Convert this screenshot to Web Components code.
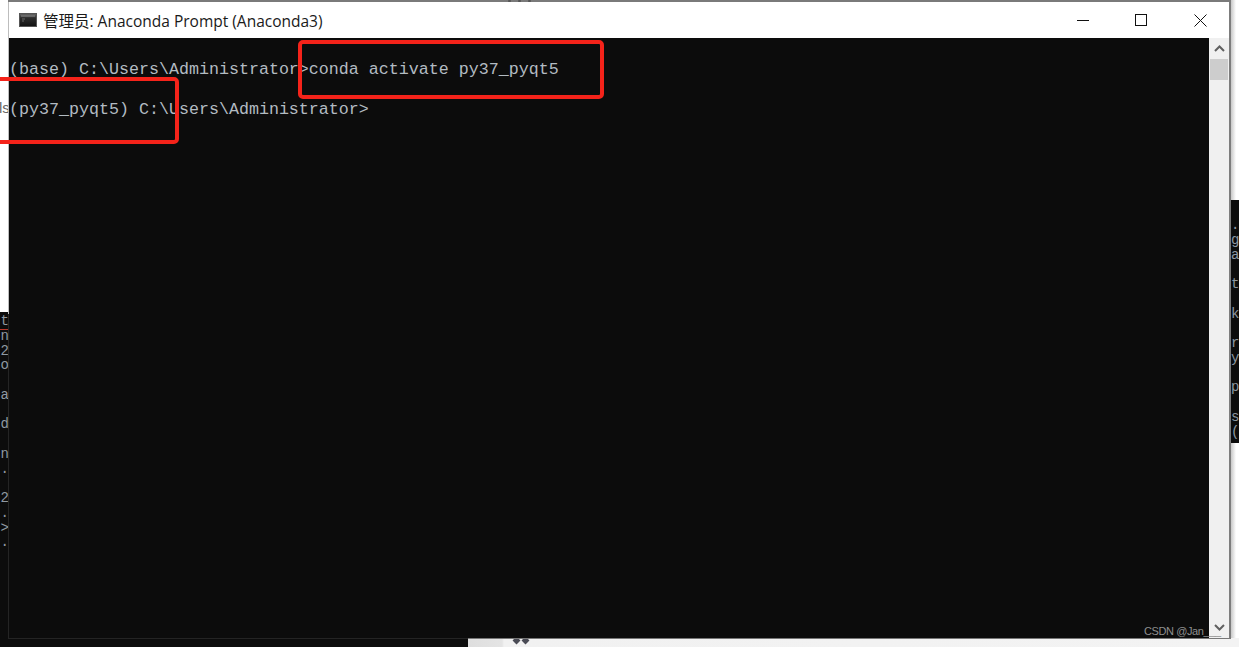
<!DOCTYPE html>
<html lang="zh">
<head>
<meta charset="utf-8">
<title>Anaconda Prompt</title>
<style>
html,body{margin:0;padding:0;background:#fff;}
body{width:1239px;height:647px;overflow:hidden;}
</style>
</head>
<body>
<desk-scene>
  <bg-log slot="left" side="left" top="314" lines="t|n|2|o||a||d||n|.||2|.|&gt;|."></bg-log>
  <bg-log slot="right" side="right" top="216" lines="s.|ag|oa||_t||ck||fr|py||_p||rs| ("></bg-log>
  <console-window slot="window" title="管理员: Anaconda Prompt (Anaconda3)">
    <console-line></console-line>
    <console-line>(base) C:\Users\Administrator&gt;conda activate py37_pyqt5</console-line>
    <console-line></console-line>
    <console-line>(py37_pyqt5) C:\Users\Administrator&gt;</console-line>
  </console-window>
  <red-callout slot="marks" style="left:298px;top:40px;width:306px;height:59px"></red-callout>
  <red-callout slot="marks" style="left:-12px;top:77px;width:191px;height:67px"></red-callout>
</desk-scene>

<script>
const shadow = (el, html) => { el.attachShadow({mode:'open'}).innerHTML = html; };

customElements.define('desk-scene', class extends HTMLElement {
  constructor(){ super(); shadow(this, `
    <style>
      :host{display:block;position:relative;width:1239px;height:647px;overflow:hidden;background:#fff;}
      .strip{position:absolute;left:0;right:0;bottom:0;height:9px;display:flex;}
      .dark{width:468px;background:#0c0c0c;}
      .light{flex:1;position:relative;background:linear-gradient(90deg,#dedede 0,#e4e4e4 34px,#f1f1f1 36px,#f3f3f3 100%);}
      .dot{position:absolute;top:-1px;width:7px;height:7px;background:#4a4b55;transform:rotate(45deg) scale(.8);}
      .handle{position:absolute;top:0;left:508px;display:flex;gap:7px;z-index:3;}
      .handle i{width:3px;height:2px;background:#555;border-radius:1px;}
      .ls{position:absolute;left:-1px;top:100px;width:10px;font:15px/16px "Liberation Sans",sans-serif;color:#666;overflow:hidden;white-space:nowrap;}
      .lpane{position:absolute;left:0;top:312px;bottom:0;width:12px;background:#0c0c0c;}
      .rpane{position:absolute;left:1222px;right:0;top:200px;height:243px;background:#0c0c0c;}
      .shadow{position:absolute;left:1231px;top:0;width:5px;height:200px;background:linear-gradient(90deg,#c8c8c8,#fff);}
      .shadow2{position:absolute;left:1231px;top:443px;width:5px;height:200px;background:linear-gradient(90deg,#c8c8c8,#fff);}
      .shadow3{position:absolute;left:1100px;top:639px;width:136px;height:3px;background:linear-gradient(#c8c8c8,#fff);}
      .win{position:absolute;left:8px;top:0;z-index:2;}
    </style>
    <div class="ls">ls</div>
    <div class="lpane"><slot name="left"></slot></div>
    <div class="rpane"><slot name="right"></slot></div>
    <div class="shadow"></div><div class="shadow2"></div><div class="shadow3"></div>
    <div class="strip"><div class="dark"></div><div class="light"><span class="dot" style="left:45px"></span><span class="dot" style="left:54px"></span></div></div>
    <div class="win"><slot name="window"></slot></div>
    <div class="handle"><i></i><i></i><i></i></div>
    <slot name="marks"></slot>`); }
});

customElements.define('bg-log', class extends HTMLElement {
  constructor(){ super();
    const rows = (this.getAttribute('lines')||'').split('|').map(s=>`<div>${s.replace('<','&lt;')||'&nbsp;'}</div>`).join('');
    const side = this.getAttribute('side');
    const top = this.getAttribute('top');
    const base = side==='left' ? 314 : 200;
    shadow(this, `<style>
      :host{display:block;height:100%;overflow:hidden;box-sizing:border-box;
        padding:${top-base+2}px 0 0 ${side==='left'?'0':'0.5px'};
        font:14px/14.75px "Liberation Mono",monospace;color:#8f99a2;white-space:pre;}
      ${side==='left'?'.t{width:9px;text-align:right}':''}
      ${side==='left'?'.u{position:absolute;left:0;top:17px;width:9px;height:1px;background:#b8382c}':''}
    </style><div class="t">${rows}</div>${side==='left'?'<div class="u"></div>':''}`);
  }
});

customElements.define('console-window', class extends HTMLElement {
  constructor(){ super();
    shadow(this, `<style>
      :host{display:flex;flex-direction:column;box-sizing:border-box;width:1223px;height:639px;
        padding:0 0 1px 1px;
        border-top:2px solid #7a7a7a;border-right:2px solid #7d7d7d;
        background:linear-gradient(90deg,#242424 460px,#777 460px) bottom/100% 1px no-repeat,
                   linear-gradient(#bdbdbd 312px,#242424 312px);}
      .body{flex:1;min-height:0;display:flex;position:relative;background:#0c0c0c;}
      .pane{flex:1;background:#0c0c0c;padding-top:2px;}
      .mark{position:absolute;left:1135px;bottom:0;font:11px/14px "Liberation Sans",sans-serif;letter-spacing:-.4px;color:#8f8f8f;white-space:pre;z-index:2;}
    </style>
    <title-bar title="${this.getAttribute('title')}"></title-bar>
    <div class="body">
      <div class="pane"><slot></slot></div>
      <scroll-rail></scroll-rail>
      <div class="mark">CSDN @Jan___</div>
    </div>`);
    this.removeAttribute('title');
  }
});

customElements.define('title-bar', class extends HTMLElement {
  constructor(){ super();
    shadow(this, `<style>
      :host{display:flex;align-items:center;height:36px;background:#fff;padding-left:10px;flex:none;}
      svg{display:block;flex:none;}
      .t{margin-left:6px;font:15.5px/20px "Open Sans","Noto Sans CJK SC",sans-serif;color:#1a1a1a;white-space:nowrap;flex:1;}
      .t span{font-family:"Noto Sans CJK SC",sans-serif;}
    </style>
    <svg width="18" height="14" viewBox="0 0 18 14">
      <defs><linearGradient id="g" x1="0" y1="0" x2="0" y2="1"><stop offset="0" stop-color="#6a6a6a"/><stop offset=".35" stop-color="#2c2c2c"/><stop offset="1" stop-color="#111"/></linearGradient></defs>
      <rect x=".5" y=".5" width="17" height="13" fill="url(#g)" stroke="#555"/>
      <path d="M2 3h14" stroke="#8a8a8a"/><path d="M3 6h3M3 8h2" stroke="#666"/>
    </svg>
    <div class="t"><span>管理员</span>: Anaconda Prompt (Anaconda3)</div>
    <window-controls></window-controls>`); }
});

customElements.define('window-controls', class extends HTMLElement {
  constructor(){ super();
    shadow(this, `<style>
      :host{display:flex;flex:none;}
      div{width:58px;height:36px;display:flex;align-items:center;justify-content:center;}
      div:last-child{width:58px;padding-left:1px;}
      svg{display:block;}
    </style>
    <div><svg width="12" height="12" viewBox="0 0 12 12"><path d="M0 6.5h12" stroke="#111" fill="none"/></svg></div>
    <div><svg width="12" height="12" viewBox="0 0 12 12"><rect x=".5" y=".5" width="11" height="11" stroke="#111" fill="none"/></svg></div>
    <div><svg width="13" height="13" viewBox="0 0 13 13"><path d="M.5.5l12 12M12.5.5l-12 12" stroke="#111" fill="none"/></svg></div>`); }
});

customElements.define('scroll-rail', class extends HTMLElement {
  constructor(){ super();
    shadow(this, `<style>
      :host{display:flex;flex-direction:column;width:20px;margin-left:1px;background:#f0f0f0;flex:none;}
      .btn{height:21px;display:flex;align-items:center;justify-content:center;flex:none;}
      .thumb{height:21px;margin:0 1px;background:#cdcdcd;flex:none;}
      .sp{flex:1;}
      svg{display:block;}
    </style>
    <div class="btn"><svg width="11" height="7" viewBox="0 0 11 7"><path d="M1 6l4.5-4.5L10 6" fill="none" stroke="#606060" stroke-width="2"/></svg></div>
    <div class="thumb"></div>
    <div class="sp"></div>
    <div class="btn"><svg width="11" height="7" viewBox="0 0 11 7"><path d="M1 1l4.5 4.5L10 1" fill="none" stroke="#606060" stroke-width="2"/></svg></div>`); }
});

customElements.define('console-line', class extends HTMLElement {
  constructor(){ super();
    shadow(this, `<style>
      :host{display:block;height:20px;font:16.667px/20px "Liberation Mono",monospace;color:#b3bbc2;white-space:pre;}
    </style><slot></slot>`); }
});

customElements.define('red-callout', class extends HTMLElement {
  constructor(){ super();
    shadow(this, `<style>
      :host{position:absolute;box-sizing:border-box;border:4px solid #f5231a;border-radius:5px;z-index:4;display:block;}
    </style>`); }
});
</script>
</body>
</html>
